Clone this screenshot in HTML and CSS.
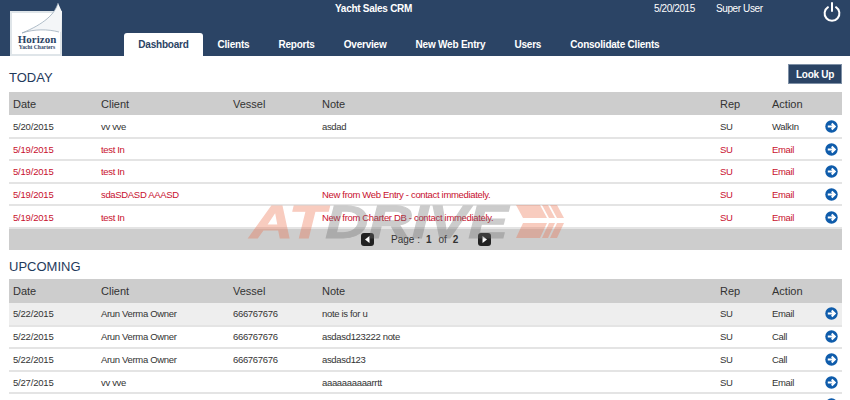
FILE: index.html
```html
<!DOCTYPE html>
<html lang="en">
<head>
<meta charset="utf-8">
<title>Yacht Sales CRM</title>
<link rel="stylesheet" href="styles.css">
</head>
<body>
<header class="topbar">
  <div class="logo">
    <svg class="logo-svg" width="54" height="56" viewBox="0 0 54 56">
      <rect x="1" y="10" width="50" height="43" fill="#fff" stroke="#dfe5e9" stroke-width="2"/>
      <path d="M48 1C45 12 34 22 12 31C24 27 38 27 51 30L52 10Z" fill="#f4f6f8"/>
      <path d="M48 1C45 12 34 22 12 31C24 27 38 27 49 30" fill="none" stroke="#8fa2b1" stroke-width=".7"/>
    </svg>
    <div class="logo-name">Horizon</div>
    <div class="logo-sub">Yacht Charters</div>
  </div>
  <div class="top-main">
    <div class="top-row">
      <div class="app-title">Yacht Sales CRM</div>
      <div class="top-date">5/20/2015</div>
      <div class="top-user">Super User</div>
      <svg class="power" width="18" height="20" viewBox="0 0 18 20"><path d="M5 5.2A7.4 7.4 0 1 0 13 5.2M9 1V9" fill="none" stroke="#fff" stroke-width="2" stroke-linecap="round"/></svg>
    </div>
    <nav class="tabs">
      <a class="tab tab-active">Dashboard</a>
      <a class="tab">Clients</a>
      <a class="tab">Reports</a>
      <a class="tab">Overview</a>
      <a class="tab">New Web Entry</a>
      <a class="tab">Users</a>
      <a class="tab">Consolidate Clients</a>
    </nav>
  </div>
</header>

<main class="content">
  <section class="today">
    <div class="section-head">
      <h2>TODAY</h2>
      <button class="lookup">Look Up</button>
    </div>
    <table>
      <thead><tr><th class="c-date">Date</th><th class="c-client">Client</th><th class="c-vessel">Vessel</th><th class="c-note">Note</th><th class="c-rep">Rep</th><th class="c-action">Action</th><th class="c-go"></th></tr></thead>
      <tbody>
        <tr><td>5/20/2015</td><td>vv vve</td><td></td><td>asdad</td><td>SU</td><td>WalkIn</td><td class="go"><svg class="arrow" viewBox="0 0 13 13"><use href="#go"/></svg></td></tr>
        <tr class="late"><td>5/19/2015</td><td>test In</td><td></td><td></td><td>SU</td><td>Email</td><td class="go"><svg class="arrow" viewBox="0 0 13 13"><use href="#go"/></svg></td></tr>
        <tr class="late"><td>5/19/2015</td><td>test In</td><td></td><td></td><td>SU</td><td>Email</td><td class="go"><svg class="arrow" viewBox="0 0 13 13"><use href="#go"/></svg></td></tr>
        <tr class="late"><td>5/19/2015</td><td>sdaSDASD AAASD</td><td></td><td>New from Web Entry - contact immediately.</td><td>SU</td><td>Email</td><td class="go"><svg class="arrow" viewBox="0 0 13 13"><use href="#go"/></svg></td></tr>
        <tr class="late"><td>5/19/2015</td><td>test In</td><td></td><td>New from Charter DB - contact immediately.</td><td>SU</td><td>Email</td><td class="go"><svg class="arrow" viewBox="0 0 13 13"><use href="#go"/></svg></td></tr>
      </tbody>
    </table>
    <div class="pager">
      <span class="pg-btn"><svg width="13" height="13" viewBox="0 0 13 13"><path d="M8.5 3V10L4 6.5Z" fill="#fff"/></svg></span>
      <span class="pg-text">Page :</span><b class="pg-num">1</b><span class="pg-of">of</span><b class="pg-total">2</b>
      <span class="pg-btn pg-next"><svg width="13" height="13" viewBox="0 0 13 13"><path d="M4.5 3V10L9 6.5Z" fill="#fff"/></svg></span>
    </div>
  </section>

  <section class="upcoming">
    <h2>UPCOMING</h2>
    <table>
      <thead><tr><th class="c-date">Date</th><th class="c-client">Client</th><th class="c-vessel">Vessel</th><th class="c-note">Note</th><th class="c-rep">Rep</th><th class="c-action">Action</th><th class="c-go"></th></tr></thead>
      <tbody>
        <tr class="hover"><td>5/22/2015</td><td>Arun Verma Owner</td><td>666767676</td><td>note is for u</td><td>SU</td><td>Email</td><td class="go"><svg class="arrow" viewBox="0 0 13 13"><use href="#go"/></svg></td></tr>
        <tr><td>5/22/2015</td><td>Arun Verma Owner</td><td>666767676</td><td>asdasd123222 note</td><td>SU</td><td>Call</td><td class="go"><svg class="arrow" viewBox="0 0 13 13"><use href="#go"/></svg></td></tr>
        <tr><td>5/22/2015</td><td>Arun Verma Owner</td><td>666767676</td><td>asdasd123</td><td>SU</td><td>Call</td><td class="go"><svg class="arrow" viewBox="0 0 13 13"><use href="#go"/></svg></td></tr>
        <tr><td>5/27/2015</td><td>vv vve</td><td></td><td>aaaaaaaaaarrtt</td><td>SU</td><td>Email</td><td class="go"><svg class="arrow" viewBox="0 0 13 13"><use href="#go"/></svg></td></tr>
        <tr><td></td><td></td><td></td><td></td><td></td><td></td><td class="go"><svg class="arrow" viewBox="0 0 13 13"><use href="#go"/></svg></td></tr>
      </tbody>
    </table>
  </section>
</main>

<div class="watermark">
  <span class="wm-text"><span class="wm-at">AT</span><span class="wm-drive">DRIVE</span></span>
  <svg class="wm-mark" width="48" height="33" viewBox="0 0 48 33"><path d="M0 0H24L31 13H7ZM26 0H32L39 13H33ZM34 0H41L48 13H41ZM7 18H31L24 33H0ZM33 18H39L32 33H26ZM41 18H48L41 33H34Z" fill="#ec6e4b"/></svg>
</div>

<svg class="defs" width="0" height="0"><defs><g id="go"><circle cx="6.5" cy="6.5" r="6.2" fill="#0f5cab"/><path d="M2.8 6.5H9.5M6.7 3.5L9.8 6.5 6.7 9.5" fill="none" stroke="#fff" stroke-width="2"/></g></defs></svg>
</body>
</html>
```
FILE: styles.css
```css
* { box-sizing: border-box; }
html, body { margin: 0; padding: 0; }
body {
  width: 850px;
  height: 400px;
  overflow: hidden;
  position: relative;
  background: #fff;
  font-family: "Liberation Sans", Arial, sans-serif;
  font-size: 10px;
  color: #333;
}
.topbar {
  height: 56px;
  background: #2b4465;
  display: flex;
  color: #fff;
}
.logo {
  width: 124px;
  position: relative;
  flex: none;
  color: #2b4465;
}
.logo-svg { position: absolute; left: 10px; top: 2px; }
.logo-name {
  position: absolute; left: 12px; width: 50px; top: 33px;
  text-align: center;
  font: bold 11px/12px "Liberation Serif", serif;
}
.logo-sub {
  position: absolute; left: 12px; width: 50px; top: 44px;
  text-align: center;
  font: bold 5.6px/7px "Liberation Serif", serif;
}
.top-main { flex: 1; display: flex; flex-direction: column; }
.top-row { height: 33px; position: relative; font-size: 10px; letter-spacing: -0.4px; }
.app-title { position: absolute; left: 211px; top: 3px; letter-spacing: -0.27px; font-weight: bold; line-height: 12px; }
.top-date { position: absolute; left: 530px; top: 3px; line-height: 12px; }
.top-user { position: absolute; left: 592px; top: 3px; line-height: 12px; }
.power { position: absolute; left: 699px; top: 2px; }
.tabs { display: flex; height: 23px; }
.tab {
  height: 23px;
  line-height: 24px;
  padding: 0 14.55px;
  font-size: 10px;
  letter-spacing: -0.22px;
  font-weight: bold;
  color: #fff;
}
.tab-active {
  width: 79px;
  padding: 0;
  text-align: center;
  background: #fff;
  color: #2b4465;
  border-radius: 3px 3px 0 0;
}
.content { padding: 0 8px 0 9px; }
.section-head { height: 36px; display: flex; justify-content: space-between; align-items: flex-start; }
h2 {
  margin: 0;
  font-size: 13px;
  font-weight: normal;
  color: #1f3a5c;
  line-height: 15px;
}
.section-head h2 { margin-top: 14px; }
.lookup {
  margin-top: 8px;
  width: 54px;
  height: 20px;
  padding: 0;
  border: 1px solid #7e90a6;
  background: #2b4465;
  color: #fff;
  letter-spacing: -0.3px;
  font: bold 10px "Liberation Sans", Arial, sans-serif;
}
table { width: 833px; border-collapse: collapse; table-layout: fixed; }
th {
  height: 23px;
  background: #cdcdcd;
  font-size: 11px;
  font-weight: normal;
  text-align: left;
  padding: 0 0 0 4px;
  color: #333;
}
td {
  height: 22.6px;
  padding: 0 0 0 4px;
  font-size: 9.5px;
  letter-spacing: -0.33px;
  border-bottom: 2px solid #e4e4e4;
  color: #333;
}
td:first-child { letter-spacing: -0.2px; }
.today td { padding-top: 1px; }
.late td { color: #c8102e; }
.hover td { background: #eeeeee; }
.c-date { width: 88px; }
.c-client { width: 132px; }
.c-vessel { width: 89px; }
.c-note { width: 398px; }
.c-rep { width: 52px; }
.c-action { width: 52px; }
td.go { padding-left: 5px; }
.arrow { width: 13px; height: 13px; display: block; }
.pager {
  height: 21px;
  background: #cdcdcd;
  display: flex;
  align-items: center;
  padding-left: 352px;
  font-size: 10px;
}
.pg-btn {
  width: 13px; height: 13px;
  background: #222;
  border-radius: 3px;
  display: block;
}
.pg-btn svg { display: block; }
.pg-text { margin-left: 17px; }
.pg-num { margin-left: 6px; }
.pg-of { margin-left: 7px; }
.pg-total { margin-left: 6px; }
.pg-next { margin-left: 20px; }
.upcoming { margin-top: 9px; }
.upcoming h2 { height: 20px; }
.upcoming th { height: 24px; }
.watermark {
  position: absolute;
  left: 250px;
  top: 204px;
  width: 320px;
  height: 38px;
  pointer-events: none;
  opacity: .35;
}
.wm-text {
  position: absolute;
  left: 0;
  top: 0;
  font: italic bold 46px/36px "Liberation Sans", Arial, sans-serif;
  white-space: nowrap;
  transform: scaleX(1.3);
  transform-origin: left top;
}
.wm-at { color: #ec6e4b; -webkit-text-stroke: 1px #ec6e4b; }
.wm-drive { color: #6e6e6e; -webkit-text-stroke: 1px #6e6e6e; }
.wm-mark { position: absolute; left: 266px; top: 1px; }
.defs { position: absolute; }
```
